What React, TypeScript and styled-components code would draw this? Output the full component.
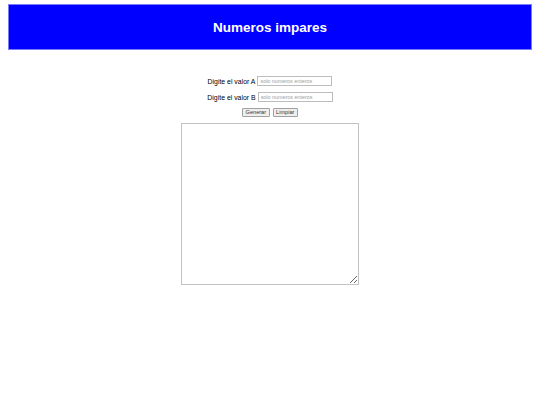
import React from "react";
import styled, { createGlobalStyle } from "styled-components";

const GlobalStyle = createGlobalStyle`
  html, body {
    margin: 0;
    padding: 0;
    background: #fff;
    font-family: "Liberation Sans", Arial, sans-serif;
  }
`;

const Page = styled.div`
  padding: 4px 8px 0;
`;

const Header = styled.header`
  height: 44px;
  display: flex;
  align-items: center;
  justify-content: center;
  background-color: #0000ff;
  border: 1px solid #7a7aff;
`;

const Title = styled.h1`
  margin: 0;
  color: #fff;
  font-size: 13.5px;
  font-weight: bold;
`;

const Form = styled.form`
  margin-top: 26px;
  display: flex;
  flex-direction: column;
  align-items: center;
  gap: 6px;
`;

const Row = styled.div`
  display: flex;
  align-items: center;
  gap: 2px;
  height: 10px;
`;

const Label = styled.label`
  font-size: 6.9px;
  color: #000;
`;

const Input = styled.input`
  box-sizing: border-box;
  width: 75px;
  height: 10px;
  padding: 0 2px;
  border: 1px solid #bdbdbd;
  font-family: "Liberation Sans", Arial, sans-serif;
  font-size: 5.4px;
  outline: none;
  &::placeholder {
    color: #a0a0a0;
  }
`;

const Buttons = styled.div`
  display: flex;
  gap: 3px;
`;

const Button = styled.button`
  box-sizing: border-box;
  height: 9px;
  padding: 0 2.5px;
  border: 1px solid #a0a0a0;
  border-radius: 1px;
  background: #efefef;
  font-family: "Liberation Sans", Arial, sans-serif;
  font-size: 5.6px;
  line-height: 7px;
  color: #333;
`;

const Output = styled.textarea`
  box-sizing: border-box;
  width: 178px;
  height: 162px;
  margin: 0;
  border: 1px solid #c2c2c2;
  outline: none;
  font-family: "Liberation Mono", monospace;
  font-size: 7px;
`;

export default function App() {
  return (
    <>
      <GlobalStyle />
      <Page>
        <Header>
          <Title>Numeros impares</Title>
        </Header>
        <Form onSubmit={(e) => e.preventDefault()}>
          <Row>
            <Label htmlFor="a">Digite el valor A</Label>
            <Input id="a" type="text" placeholder="solo numeros enteros" />
          </Row>
          <Row>
            <Label htmlFor="b">Digite el valor B</Label>
            <Input id="b" type="text" placeholder="solo numeros enteros" />
          </Row>
          <Buttons>
            <Button type="button">Generar</Button>
            <Button type="reset">Limpiar</Button>
          </Buttons>
          <Output readOnly />
        </Form>
      </Page>
    </>
  );
}
